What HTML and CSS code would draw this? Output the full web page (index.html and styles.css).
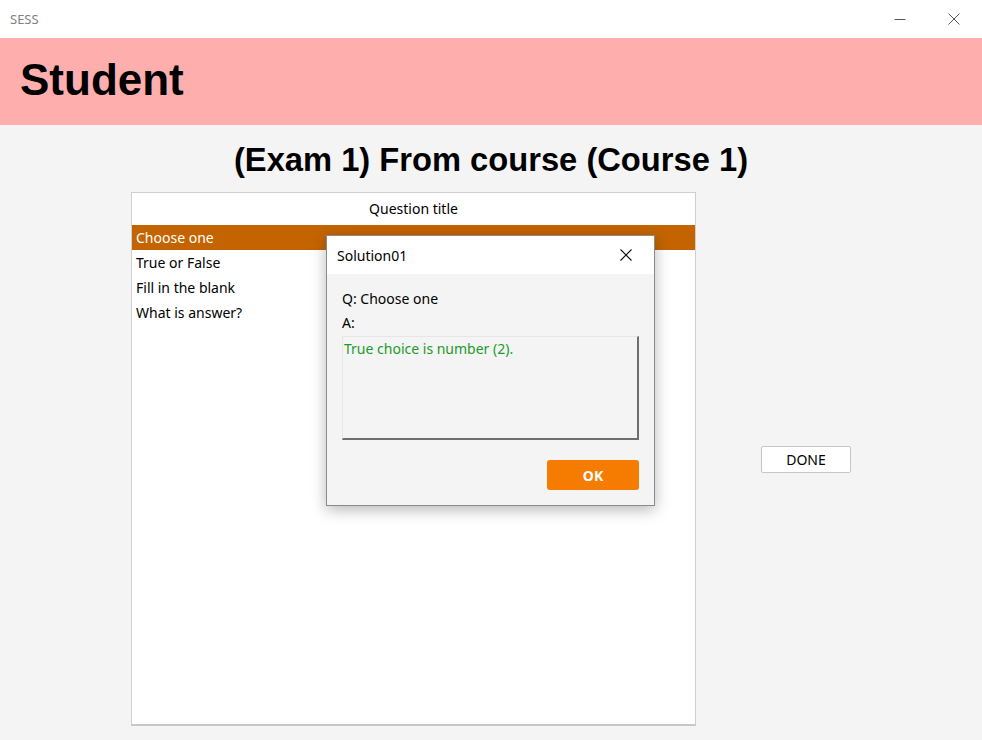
FILE: index.html
```html
<!DOCTYPE html>
<html>
<head>
<meta charset="utf-8">
<link rel="stylesheet" href="styles.css">
</head>
<body>
<div class="window">
  <div class="titlebar">
    <span class="app-name">SESS</span>
    <div class="win-controls">
      <span class="ctl"><svg width="12" height="12" viewBox="0 0 12 12"><path d="M0.5 6.5 H11.5" stroke="#555" stroke-width="1"/></svg></span>
      <span class="ctl"><svg width="12" height="12" viewBox="0 0 12 12"><path d="M0.5 0.5 L11.5 11.5 M11.5 0.5 L0.5 11.5" stroke="#555" stroke-width="1"/></svg></span>
    </div>
  </div>
  <div class="header"><h1>Student</h1></div>
  <div class="main">
    <h2 class="exam-title">(Exam 1) From course (Course 1)</h2>
    <div class="content">
      <div class="table">
        <div class="table-head">Question title</div>
        <div class="row selected">Choose one</div>
        <div class="row">True or False</div>
        <div class="row">Fill in the blank</div>
        <div class="row">What is answer?</div>
      </div>
      <button class="done">DONE</button>
    </div>
  </div>

  <div class="dialog">
    <div class="dlg-title">
      <span>Solution01</span>
      <svg class="dlg-close" width="12" height="12" viewBox="0 0 12 12"><path d="M0.5 0.5 L11.5 11.5 M11.5 0.5 L0.5 11.5" stroke="#111" stroke-width="1.1"/></svg>
    </div>
    <div class="dlg-body">
      <div class="line">Q: Choose one</div>
      <div class="line">A:</div>
      <div class="answer">True choice is number (2).</div>
      <div class="dlg-actions"><button class="ok">OK</button></div>
    </div>
  </div>
</div>
</body>
</html>
```
FILE: styles.css
```css
html, body {
  margin: 0;
  padding: 0;
}
body {
  width: 982px;
  height: 740px;
  overflow: hidden;
  font-family: "Noto Sans", "Open Sans", sans-serif;
  background: #f4f4f4;
}
.window {
  position: relative;
  width: 982px;
  height: 740px;
  display: flex;
  flex-direction: column;
}
.titlebar {
  height: 38px;
  background: #fff;
  display: flex;
  align-items: center;
  justify-content: space-between;
  padding-left: 10px;
  box-sizing: border-box;
}
.app-name {
  font-size: 13px;
  color: #808080;
}
.win-controls {
  display: flex;
  height: 38px;
}
.ctl {
  width: 52px;
  display: flex;
  align-items: center;
  justify-content: center;
}
.ctl:last-child {
  width: 56px;
}
.header {
  height: 87px;
  box-sizing: border-box;
  background: #ffaeae;
  display: flex;
  align-items: center;
  padding-left: 20px;
  padding-bottom: 3px;
}
.header h1 {
  margin: 0;
  font-family: "Liberation Sans", Arial, sans-serif;
  font-weight: bold;
  font-size: 44px;
  color: #000;
  line-height: 1;
}
.main {
  flex: 1;
  background: #f4f4f4;
  display: flex;
  flex-direction: column;
}
.exam-title {
  margin: 0;
  padding-top: 16px;
  height: 67px;
  box-sizing: border-box;
  text-align: center;
  font-family: "Liberation Sans", Arial, sans-serif;
  font-weight: bold;
  font-size: 32.7px;
  line-height: 37px;
  color: #000;
}
.content {
  display: flex;
  align-items: center;
  padding-left: 131px;
  gap: 65px;
}
.table {
  width: 565px;
  height: 534px;
  box-sizing: border-box;
  background: #fff;
  border: 1px solid #cfcfcf;
  border-bottom: 2px solid #c8c8c8;
}
.table-head {
  height: 32px;
  line-height: 32px;
  text-align: center;
  font-size: 14px;
  color: #000;
}
.row {
  height: 25px;
  line-height: 25px;
  padding-left: 4px;
  font-size: 14px;
  color: #000;
}
.row.selected {
  background: #c46400;
  color: #fff;
}
.done {
  width: 90px;
  height: 27px;
  background: #fff;
  border: 1px solid #c6c6c6;
  border-radius: 2px;
  font-family: "Noto Sans", "Open Sans", sans-serif;
  font-size: 14px;
  color: #000;
  padding: 0;
}
.dialog {
  position: absolute;
  left: 326px;
  top: 235px;
  width: 329px;
  height: 271px;
  box-sizing: border-box;
  border: 1px solid #8a8a8a;
  background: #f4f4f4;
  box-shadow: 0 4px 14px rgba(0,0,0,0.28);
  display: flex;
  flex-direction: column;
}
.dlg-title {
  height: 38px;
  background: #fff;
  display: flex;
  align-items: center;
  justify-content: space-between;
  padding: 0 22px 0 10px;
  font-size: 14px;
  color: #000;
}
.dlg-body {
  flex: 1;
  padding: 13px 15px 0 15px;
  display: flex;
  flex-direction: column;
}
.line {
  font-size: 14px;
  height: 24px;
  line-height: 24px;
  color: #000;
}
.answer {
  margin-top: 1px;
  height: 104px;
  box-sizing: border-box;
  border-top: 1px solid #e6e6e6;
  border-left: 1px solid #e6e6e6;
  border-right: 2px solid #6e6e6e;
  border-bottom: 2px solid #6e6e6e;
  background: #f4f4f4;
  color: #1c9a2a;
  font-size: 14px;
  padding: 2px 0 0 1px;
  line-height: 20px;
}
.dlg-actions {
  display: flex;
  justify-content: flex-end;
  padding-top: 20px;
}
.ok {
  width: 92px;
  height: 30px;
  border: none;
  border-radius: 3px;
  background: #f57c00;
  color: #fff;
  font-family: "Noto Sans", "Open Sans", sans-serif;
  font-weight: bold;
  font-size: 14px;
  padding: 0;
}
```
